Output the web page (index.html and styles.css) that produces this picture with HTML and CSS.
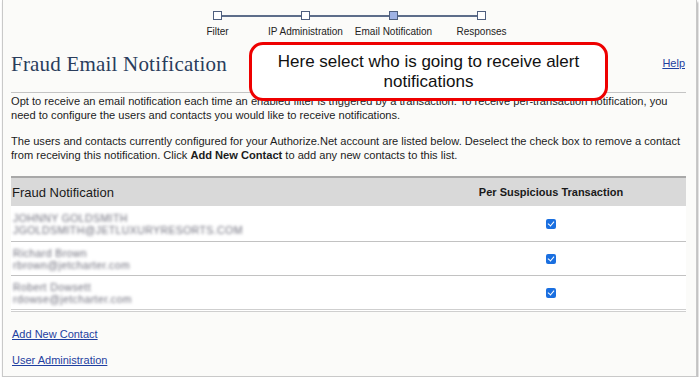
FILE: index.html
```html
<!DOCTYPE html>
<html lang="en">
  <head>
    <meta charset="UTF-8" />
    <meta name="viewport" content="width=device-width, initial-scale=1.0" />
    <title>Fraud Email Notification</title>
    <link rel="stylesheet" href="styles.css">
  </head>
  <body>
    <div class="frame">
      <div class="stepper">
        <div class="step first">
          <div class="track"><span class="half"></span><span class="node"></span><span class="half"></span></div>
          <span class="step-label">Filter</span>
        </div>
        <div class="step">
          <div class="track"><span class="half"></span><span class="node"></span><span class="half"></span></div>
          <span class="step-label">IP Administration</span>
        </div>
        <div class="step">
          <div class="track"><span class="half"></span><span class="node node-active"></span><span class="half"></span></div>
          <span class="step-label">Email Notification</span>
        </div>
        <div class="step last">
          <div class="track"><span class="half"></span><span class="node"></span><span class="half"></span></div>
          <span class="step-label">Responses</span>
        </div>
      </div>

      <div class="title-row">
        <h1 class="title">Fraud Email Notification</h1>
        <a class="help" href="#">Help</a>
        <div class="callout">Here select who is going to receive alert notifications</div>
      </div>

      <p class="text">
        Opt to receive an email notification each time an enabled filter is triggered by a transaction. To receive per-transaction notification, you
        need to configure the users and contacts you would like to receive notifications.
      </p>
      <p class="text">
        The users and contacts currently configured for your Authorize.Net account are listed below. Deselect the check box to remove a contact
        from receiving this notification. Click <b>Add New Contact</b> to add any new contacts to this list.
      </p>

      <table class="contacts">
        <thead>
          <tr>
            <th class="col-name">Fraud Notification</th>
            <th class="col-check">Per Suspicious Transaction</th>
          </tr>
        </thead>
        <tbody>
          <tr>
            <td class="col-name">
              <div class="blurred">JOHNNY GOLDSMITH</div>
              <div class="blurred">JGOLDSMITH@JETLUXURYRESORTS.COM</div>
            </td>
            <td class="col-check"><span class="check"></span></td>
          </tr>
          <tr>
            <td class="col-name">
              <div class="blurred">Richard Brown</div>
              <div class="blurred">rbrown@jetcharter.com</div>
            </td>
            <td class="col-check"><span class="check"></span></td>
          </tr>
          <tr>
            <td class="col-name">
              <div class="blurred">Robert Dowsett</div>
              <div class="blurred">rdowse@jetcharter.com</div>
            </td>
            <td class="col-check"><span class="check"></span></td>
          </tr>
        </tbody>
      </table>

      <div class="links">
        <a href="#">Add New Contact</a>
        <a href="#">User Administration</a>
      </div>
    </div>
  </body>
</html>
```

FILE: styles.css
```css
body {
  margin: 0;
  background: #ffffff;
  font-family: "Liberation Sans", Arial, sans-serif;
  color: #1a1a1a;
}

.frame {
  box-sizing: border-box;
  height: 377px;
  margin: 0 2px 0 2px;
  padding: 0 10px 0 8px;
  border: 1px solid #c9c9c9;
  border-top: none;
  background: #fbfbf9;
  box-shadow: 1px 2px 2px rgba(0, 0, 0, 0.35);
}

.stepper {
  display: flex;
  justify-content: center;
  padding-top: 11px;
  margin-left: 2px;
}

.step {
  width: 88px;
  display: flex;
  flex-direction: column;
  align-items: center;
}

.track {
  display: flex;
  align-items: center;
  width: 100%;
  height: 9px;
}

.half {
  flex: 1;
  height: 2px;
  background: #5d6d8a;
}

.first .half:first-child,
.last .half:last-child {
  background: transparent;
}

.node {
  box-sizing: border-box;
  width: 9px;
  height: 9px;
  border: 1px solid #4f5f7e;
  background: #ffffff;
}

.node-active {
  background: #9fb2e4;
}

.step-label {
  margin-top: 6px;
  font-size: 10px;
  white-space: nowrap;
  color: #222;
}

.title-row {
  position: relative;
  display: flex;
  justify-content: space-between;
  align-items: center;
  height: 55px;
  border-bottom: 1px solid #c4c4c4;
}

.title {
  margin: 0;
  font-family: "Liberation Serif", "Times New Roman", serif;
  font-weight: normal;
  font-size: 21px;
  color: #2a3d5c;
  letter-spacing: 0.2px;
}

.help {
  margin-right: 1px;
  margin-bottom: 4px;
  font-size: 11px;
  color: #1f3fa0;
}

.callout {
  position: absolute;
  left: 238px;
  top: 5px;
  box-sizing: border-box;
  width: 359px;
  height: 59px;
  padding: 7px 14px 0;
  border: 3px solid #ee0000;
  border-radius: 14px;
  background: #ffffff;
  font-size: 17px;
  line-height: 20px;
  text-align: center;
  color: #111;
}

.text {
  margin: 1px 0 12px;
  font-size: 11.1px;
  line-height: 14px;
  color: #1c1c1c;
}

.contacts {
  width: 100%;
  border-collapse: collapse;
  margin-top: 14px;
  border-top: 2px solid #a8a8a8;
  border-bottom: 3px double #cfcfcf;
}

.contacts th {
  height: 28px;
  padding: 0;
  background: #d9d9d9;
  text-align: left;
}

.contacts th.col-name {
  font-size: 13px;
  font-weight: normal;
  padding-left: 1px;
}

.contacts th.col-check {
  font-size: 11px;
  font-weight: bold;
  text-align: center;
}

.contacts td {
  height: 33px;
  padding: 0;
  border-top: 1px solid #c2c2c2;
  background: #ffffff;
}

.contacts tbody tr:first-child td {
  height: 35px;
  border-top: none;
}

.col-name {
  width: 60%;
  padding-left: 1px;
}

.col-check {
  text-align: center;
}

.blurred {
  font-size: 10.5px;
  line-height: 12px;
  letter-spacing: 0.4px;
  color: #6f6f7c;
  filter: blur(1.4px);
  padding-left: 2px;
}

.check {
  display: inline-block;
  vertical-align: middle;
  width: 10px;
  height: 10px;
  border-radius: 2px;
  background: #1a6fe0;
  position: relative;
}

.check::after {
  content: "";
  position: absolute;
  left: 3px;
  top: 1px;
  width: 3px;
  height: 5px;
  border: solid #ffffff;
  border-width: 0 1.5px 1.5px 0;
  transform: rotate(40deg);
}

.links {
  display: flex;
  flex-direction: column;
  align-items: flex-start;
  gap: 12px;
  padding-top: 15px;
  padding-left: 1px;
}

.links a {
  font-size: 11px;
  line-height: 14px;
  color: #1f3fa0;
}
```
